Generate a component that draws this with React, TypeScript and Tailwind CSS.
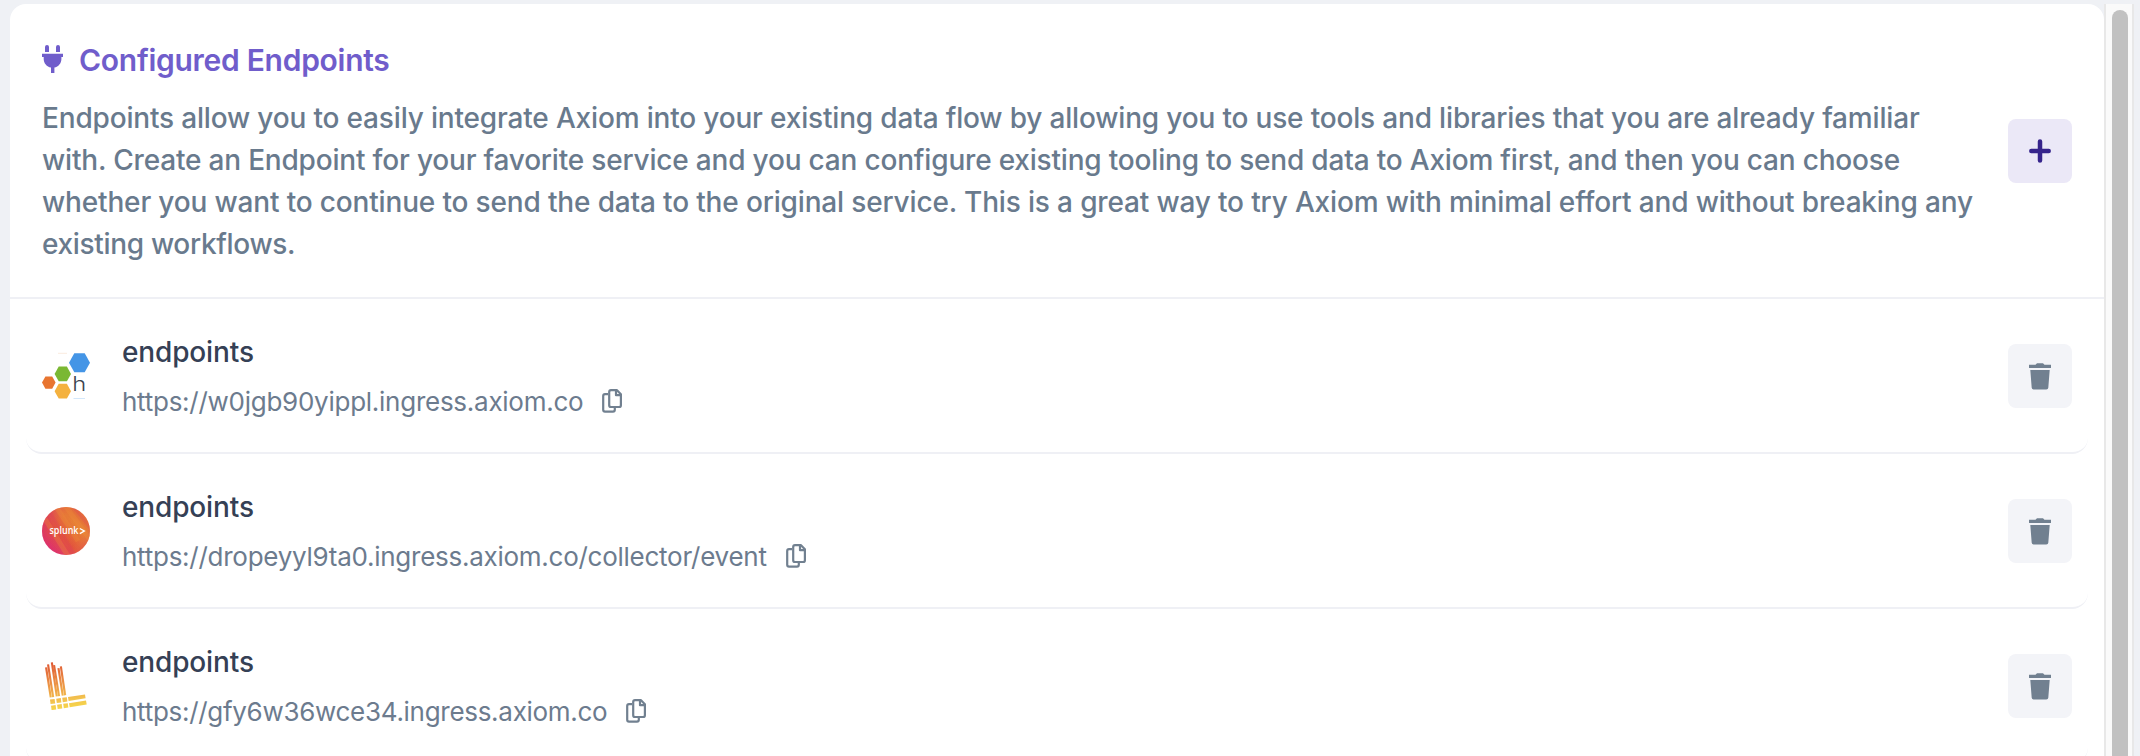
import React from "react";

function PlugIcon() {
  return (
    <svg className="h-7 w-[21px] shrink-0" viewBox="0 0 21 28" fill="#705dcb">
      <path d="M3 7V2a2 2 0 0 1 4 0v5zM14 7V2a2 2 0 0 1 4 0v5z" />
      <path d="M0 8.700h21v3.300h-1.600v2c0 4.300-3 7.800-7 8.600V28H9v-5.400c-4.200-.8-7.300-4.300-7.300-8.600v-2H0z" />
    </svg>
  );
}

function CopyIcon() {
  return (
    <svg className="h-6 w-5 shrink-0" viewBox="0 0 20 24" fill="none" stroke="#718090" strokeWidth="2.200" strokeLinejoin="round">
      <path d="M6 5.200H3A1.800 1.800 0 0 0 1.200 7v13.800a1.800 1.800 0 0 0 1.800 1.800h8a1.800 1.800 0 0 0 1.800-1.800V18" />
      <path d="M9 1.200h6l3.900 4v11a1.800 1.800 0 0 1-1.800 1.800H9a1.800 1.800 0 0 1-1.800-1.800V3A1.800 1.800 0 0 1 9 1.200z" />
      <path d="M14 1.200v5h5" />
    </svg>
  );
}

function TrashIcon() {
  return (
    <svg className="h-[27px] w-[22px]" viewBox="0 0 22 27" fill="#718090">
      <path d="M0 1.800h6.500L8 .3h6l1.500 1.500H22V5H0z" />
      <path d="M1.300 7h19.400L19.300 24.700a2 2 0 0 1-2 1.800H4.700a2 2 0 0 1-2-1.800z" />
    </svg>
  );
}

function HoneycombLogo() {
  return (
    <svg className="size-12 shrink-0" viewBox="0 0 48 48">
      <path d="M32.300 1.200h10.400L48 10.700l-5.300 9.500H32.300L27 10.700z" fill="#4495e6" />
      <path d="M16.700 14.500h8.200l4.100 7.400-4.100 7.400h-8.200l-4.100-7.400z" fill="#7ab833" />
      <path d="M3.400 24.500h6.800l3.400 6-3.400 6.200H3.400L0 30.500z" fill="#e87530" />
      <path d="M16.700 31.800h8.200l4.100 7.400-4.100 7.400h-8.200l-4.100-7.400z" fill="#f4b13e" />
      <path d="M16 1.300h9" stroke="#fbebdf" strokeWidth="1" />
      <path d="M31.500 46.500H43" stroke="#d3e7fa" strokeWidth="1" />
      <text x="30.300" y="39" textLength="14" lengthAdjust="spacingAndGlyphs" fontFamily="Inter, sans-serif" fontWeight="300" fontSize="20" fill="#3b4350">h</text>
    </svg>
  );
}

function SplunkLogo() {
  return (
    <svg className="size-12 shrink-0" viewBox="0 0 48 48">
      <defs>
        <linearGradient id="splunk" x1="0.1" y1="0.9" x2="0.85" y2="0.15">
          <stop offset="0" stopColor="#dc2384" />
          <stop offset="0.4" stopColor="#e2503f" />
          <stop offset="0.75" stopColor="#e88435" />
          <stop offset="1" stopColor="#e36a3d" />
        </linearGradient>
        <linearGradient id="splunkEdge" x1="0" y1="0.2" x2="1" y2="0.8">
          <stop offset="0" stopColor="#d9277b" stopOpacity="0.6" />
          <stop offset="0.35" stopColor="#e05445" stopOpacity="0.2" />
          <stop offset="0.75" stopColor="#e8803a" stopOpacity="0.1" />
          <stop offset="1" stopColor="#df4d5c" stopOpacity="0.7" />
        </linearGradient>
        <clipPath id="splunkDisc"><circle cx="24" cy="24" r="24" /></clipPath>
      </defs>
      <g clipPath="url(#splunkDisc)">
        <rect width="48" height="48" fill="url(#splunk)" />
        <rect width="48" height="48" fill="url(#splunkEdge)" />
        <path d="M13-2L36 34M22-3L49 34M3 12L26 49" stroke="#ef9138" strokeWidth="5" opacity="0.3" />
        <path d="M5 0L34 50M30-2L52 26" stroke="#d93862" strokeWidth="3" opacity="0.2" />
      </g>
      <text x="7.500" y="27.200" textLength="29" lengthAdjust="spacingAndGlyphs" fontFamily="Open Sans, sans-serif" fontWeight="600" fontSize="10.500" fill="#fff">splunk</text>
      <path d="M37.800 21.500l4.500 2.500-4.500 2.700" fill="none" stroke="#fff" strokeWidth="1.400" />
    </svg>
  );
}

function LokiLogo() {
  return (
    <svg className="size-12 shrink-0" viewBox="0 0 48 48">
      <defs>
        <linearGradient id="loki" gradientUnits="userSpaceOnUse" x1="20" y1="0" x2="26" y2="48">
          <stop offset="0" stopColor="#e05b35" />
          <stop offset="0.45" stopColor="#ec9445" />
          <stop offset="0.8" stopColor="#f3c44e" />
          <stop offset="1" stopColor="#f6d94a" />
        </linearGradient>
      </defs>
      <g fill="url(#loki)">
        <path d="M3 5.500L5.200 5.200 9.800 35.200 7.700 35.500z" />
        <path d="M5 2.500L7.100 2.200 12.200 34.900 10 35.200z" />
        <path d="M8.800 .5l2.100-.3L15.900 34.300 13.700 34.600z" />
        <path d="M11 3.200l2.100-.3L18.100 34 16 34.300z" />
        <path d="M15.400 6.200l2.100-.3L21.800 33.500 19.700 33.800z" />
        <path d="M17.800 4.500l2.100-.3L24.200 33.100 22 33.400z" />
        <path d="M8 37.600l4.600-.6.600 4.400-4.600.6z" />
        <path d="M14.200 36.700l4.600-.6.600 4.400-4.600.6z" />
        <path d="M20.200 35.800l4.600-.6.600 4.400-4.600.6z" />
        <path d="M9 43.700l4.600-.6.600 4.400-4.600.6z" />
        <path d="M15.100 42.700l4.600-.6.600 4.400-4.600.6z" />
        <path d="M21.200 41.800l4.600-.6.600 4.400-4.600.6z" />
        <path d="M26 35.100l17-2.600.6 3.800-17 2.700z" />
        <path d="M27 41.200l17-2.600.7 4-17 2.700z" />
      </g>
    </svg>
  );
}

const endpoints = [
  { url: "https://w0jgb90yippl.ingress.axiom.co", tracking: "tracking-[-0.26px]", Logo: HoneycombLogo },
  { url: "https://dropeyyl9ta0.ingress.axiom.co/collector/event", tracking: "tracking-[-0.26px]", Logo: SplunkLogo },
  { url: "https://gfy6w36wce34.ingress.axiom.co", tracking: "tracking-[-0.29px]", Logo: LokiLogo },
];

export default function App() {
  return (
    <div className="flex h-[756px] w-[2140px] overflow-hidden bg-[#eff1f5] pt-1 pl-2.5 font-['Inter',sans-serif]">
      <main className="h-[800px] w-[2094px] shrink-0 rounded-t-2xl bg-white">
        <header className="flex h-[295px] items-start border-b-2 border-[#eff0f5] pl-8">
          <div className="w-[1942px] shrink-0 pt-8">
            <h1 className="flex h-[46px] items-center gap-4 text-[30px] font-semibold tracking-[-0.28px] text-[#705dcb]">
              <PlugIcon />
              <span className="pt-0.5">Configured Endpoints</span>
            </h1>
            <p className="mt-[15px] text-[28px] leading-[42px] font-medium whitespace-nowrap text-[#697a8d]">
              <span className="block tracking-[-0.173px]">Endpoints allow you to easily integrate Axiom into your existing data flow by allowing you to use tools and libraries that you are already familiar</span>
              <span className="block tracking-[-0.19px]">with. Create an Endpoint for your favorite service and you can configure existing tooling to send data to Axiom first, and then you can choose</span>
              <span className="block tracking-[-0.16px]">whether you want to continue to send the data to the original service. This is a great way to try Axiom with minimal effort and without breaking any</span>
              <span className="block tracking-[-0.32px]">existing workflows.</span>
            </p>
          </div>
          <button className="mt-[115px] ml-6 flex size-16 items-center justify-center rounded-lg bg-[#ebe8f7]">
            <svg className="h-6 w-[22px]" viewBox="0 0 22 24" stroke="#36248c" strokeWidth="4.500" strokeLinecap="round">
              <path d="M11 2.500v19M2.300 12h17.400" />
            </svg>
          </button>
        </header>
        <ul className="px-4">
          {endpoints.map(({ url, tracking, Logo }) => (
            <li key={url} className="flex h-[155px] items-center rounded-b-2xl border-b-2 border-[#eff0f5] px-4">
              <Logo />
              <div className="ml-8 flex-1 pt-0.5">
                <h2 className="h-[42px] text-[28px] leading-[42px] font-medium tracking-[-0.14px] text-[#354055]">endpoints</h2>
                <div className="mt-[7px] flex h-[42px] items-center gap-[19px] text-[26px] text-[#6c7b8e]">
                  <span className={tracking}>{url}</span>
                  <CopyIcon />
                </div>
              </div>
              <button className="mt-px flex size-16 items-center justify-center rounded-lg bg-[#f3f4f8]">
                <TrashIcon />
              </button>
            </li>
          ))}
        </ul>
      </main>
      <div className="flex h-[800px] w-[30px] justify-center border-x-2 border-[#e8e8e8] bg-[#fafafa] pt-1.5 pl-px">
        <div className="h-[790px] w-4 rounded-full bg-[#c1c1c1]" />
      </div>
    </div>
  );
}
